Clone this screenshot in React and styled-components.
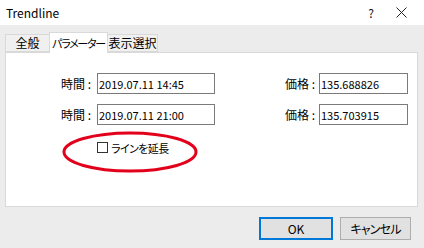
import React from "react";
import styled, { createGlobalStyle } from "styled-components";

const Global = createGlobalStyle`
  html, body { margin: 0; padding: 0; background: #ececec; }
  body { font-family: "Noto Sans CJK JP", "Noto Sans", sans-serif; font-size: 12px; color: #000; }
  * { box-sizing: border-box; }
`;

const Window = styled.div`
  width: 424px;
  height: 248px;
  background: #ececec;
  display: flex;
  flex-direction: column;
  overflow: hidden;
  font-feature-settings: "palt";
`;

const TitleBar = styled.div`
  height: 25px;
  background: #fff;
  display: flex;
  align-items: center;
  padding-left: 6px;
  flex-shrink: 0;
`;

const Title = styled.div`
  flex: 1;
  font-size: 12px;
  line-height: 1;
`;

const TitleButton = styled.div`
  width: ${(p) => p.$w}px;
  display: flex;
  justify-content: center;
  align-items: center;
  font-size: 12px;
  color: #111;
`;

const Body = styled.div`
  padding: 7px 6px 0 5px;
  display: flex;
  flex-direction: column;
`;

const TabStrip = styled.div`
  display: flex;
  align-items: flex-end;
  height: 20px;
  position: relative;
  z-index: 1;
`;

const Tab = styled.div`
  width: ${(p) => p.$w}px;
  height: ${(p) => (p.$active ? 21 : 18)}px;
  margin-bottom: ${(p) => (p.$active ? -1 : 0)}px;
  background: ${(p) => (p.$active ? "#fff" : "#f0f0f0")};
  border: 1px solid #d9d9d9;
  border-bottom: ${(p) => (p.$active ? "none" : "1px solid #d9d9d9")};
  border-left: ${(p) => (p.$first || p.$active ? "1px solid #d9d9d9" : "none")};
  border-right: ${(p) => (p.$beforeActive ? "none" : "1px solid #d9d9d9")};
  display: flex;
  align-items: center;
  justify-content: center;
  padding-top: ${(p) => (p.$active ? 1 : 0)}px;
  font-size: ${(p) => p.$fs || 12}px;
  letter-spacing: ${(p) => p.$ls || 0}px;
  white-space: nowrap;
  overflow: hidden;
  line-height: 1;
`;

const Panel = styled.div`
  height: 155px;
  background: #fff;
  border: 1px solid #d9d9d9;
  position: relative;
  padding: 20px 9px 0 0;
`;

const Form = styled.div`
  display: grid;
  grid-template-columns: 91px 118px 1fr 89px;
  grid-auto-rows: 21px;
  row-gap: 10px;
  align-items: center;
`;

const Label = styled.div`
  text-align: right;
  padding-right: ${(p) => p.$pad}px;
  font-size: 12px;
  white-space: nowrap;
`;

const Field = styled.div`
  height: 21px;
  border: 1px solid #7a7a7a;
  display: flex;
  align-items: center;
  padding-left: 1px;
  font-size: 11px;
  background: #fff;
`;

const CheckRow = styled.div`
  grid-column: 2 / span 3;
  display: flex;
  align-items: center;
  gap: 3px;
  margin-top: 4px;
`;

const CheckBox = styled.div`
  width: 11px;
  height: 11px;
  border: 1px solid #333;
  background: #fff;
`;

const CheckLabel = styled.span`
  font-size: 11px;
  letter-spacing: -0.6px;
  white-space: nowrap;
`;

const Annotation = styled.svg`
  position: absolute;
  left: 56px;
  top: 78px;
  pointer-events: none;
`;

const ButtonRow = styled.div`
  display: flex;
  justify-content: flex-end;
  gap: 7px;
  padding-right: 7px;
  margin-top: 10px;
`;

const Button = styled.div`
  width: ${(p) => p.$w}px;
  height: 23px;
  background: #e1e1e1;
  border: ${(p) => (p.$default ? "2px solid #0078d7" : "1px solid #adadad")};
  display: flex;
  align-items: center;
  justify-content: center;
  font-size: 12px;
  letter-spacing: ${(p) => p.$ls || 0}px;
  white-space: nowrap;
`;

export default function App() {
  return (
    <>
      <Global />
      <Window>
        <TitleBar>
          <Title>Trendline</Title>
          <TitleButton $w={14}>?</TitleButton>
          <TitleButton $w={46}>
            <svg width="11" height="11" viewBox="0 0 11 11">
              <path d="M0.5 0.5 L10.5 10.5 M10.5 0.5 L0.5 10.5" stroke="#222" strokeWidth="1" fill="none" />
            </svg>
          </TitleButton>
        </TitleBar>
        <Body>
          <TabStrip>
            <Tab $w={44} $first $beforeActive>全般</Tab>
            <Tab $w={59} $active $fs={11} $ls={-1.3}>パラメーター</Tab>
            <Tab $w={50}>表示選択</Tab>
          </TabStrip>
          <Panel>
            <Form>
              <Label $pad={6}>時間 :</Label>
              <Field>2019.07.11 14:45</Field>
              <Label $pad={4}>価格 :</Label>
              <Field>135.688826</Field>
              <Label $pad={6}>時間 :</Label>
              <Field>2019.07.11 21:00</Field>
              <Label $pad={4}>価格 :</Label>
              <Field>135.703915</Field>
              <CheckRow>
                <CheckBox />
                <CheckLabel>ラインを延長</CheckLabel>
              </CheckRow>
            </Form>
            <Annotation width="140" height="44" viewBox="0 0 140 44">
              <ellipse cx="68" cy="21" rx="66" ry="19" fill="none" stroke="#e2001a" strokeWidth="3" />
            </Annotation>
          </Panel>
          <ButtonRow>
            <Button $w={74} $default>OK</Button>
            <Button $w={71} $ls={-0.8}>キャンセル</Button>
          </ButtonRow>
        </Body>
      </Window>
    </>
  );
}
